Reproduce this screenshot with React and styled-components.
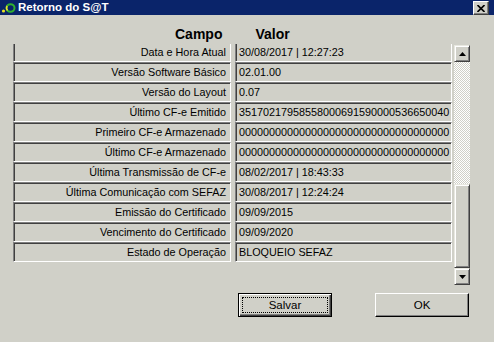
import React from 'react';
import styled, { createGlobalStyle } from 'styled-components';

const GlobalStyle = createGlobalStyle`
  body {
    margin: 0;
    background: #d0d0c8;
    font-family: "Liberation Sans", Arial, sans-serif;
  }
`;

const Window = styled.div`
  width: 494px;
  height: 342px;
  overflow: hidden;
  background: #d0d0c8;
`;

const TitleBar = styled.div`
  height: 15px;
  background: #0a246a;
  display: flex;
  align-items: center;
  padding-left: 1px;
`;

const TitleText = styled.span`
  color: #fff;
  font-weight: bold;
  font-size: 11.5px;
  line-height: 15px;
  margin-left: 2px;
`;

const CloseButton = styled.div`
  margin-left: auto;
  margin-right: 5px;
  align-self: flex-start;
  margin-top: 1px;
  width: 16px;
  height: 14px;
  box-sizing: border-box;
  background: #d0d0c8;
  border-top: 1px solid #fff;
  border-left: 1px solid #fff;
  border-right: 1px solid #404040;
  border-bottom: 1px solid #404040;
  box-shadow: inset -1px -1px 0 #808080;
  display: flex;
  align-items: center;
  justify-content: center;
`;

const Header = styled.div`
  display: flex;
  padding: 11px 0 2px 175px;
  gap: 33px;
  font-weight: bold;
  font-size: 14px;
  line-height: 16px;
  color: #000;
`;

const Body = styled.div`
  display: flex;
  align-items: flex-start;
  padding-left: 13px;
`;

const Viewport = styled.div`
  width: 439px;
  height: 241px;
  overflow: hidden;
`;

const List = styled.div`
  margin-top: -2px;
`;

const Row = styled.div`
  display: grid;
  grid-template-columns: 218px 217px;
  column-gap: 4px;
`;

const Cell = styled.div`
  box-sizing: border-box;
  height: 20px;
  border-top: 1px solid #808080;
  border-left: 1px solid #808080;
  border-bottom: 1px solid #fff;
  border-right: 1px solid #fff;
  box-shadow: inset 1px 1px 0 #404040;
  font-size: 10.8px;
  line-height: 18px;
  color: #000;
  white-space: nowrap;
  overflow: hidden;
  text-align: ${p => (p.$right ? 'right' : 'left')};
  padding: ${p => (p.$right ? '0 4px 0 0' : '0 0 0 3px')};
`;

const ScrollBar = styled.div`
  margin-left: 2px;
  margin-top: 1px;
  width: 16px;
  height: 240px;
  display: flex;
  flex-direction: column;
`;

const ScrollButton = styled.div`
  box-sizing: border-box;
  height: 17px;
  background: #d0d0c8;
  border-top: 1px solid #e8e8e0;
  border-left: 1px solid #e8e8e0;
  border-right: 1px solid #404040;
  border-bottom: 1px solid #404040;
  box-shadow: inset 1px 1px 0 #fff, inset -1px -1px 0 #808080;
  display: flex;
  align-items: center;
  justify-content: center;
`;

const Track = styled.div`
  height: ${p => p.$h}px;
  background: repeating-conic-gradient(#fff 0 25%, #d0d0c8 0 50%) 0 0 / 2px 2px;
`;

const Thumb = styled(ScrollButton)`
  height: ${p => p.$h}px;
`;

const ButtonRow = styled.div`
  display: flex;
  justify-content: flex-end;
  gap: 43px;
  padding: 8px 25px 0 0;
`;

const Button = styled.button`
  box-sizing: border-box;
  width: 94px;
  height: 24px;
  padding: 0;
  background: #d0d0c8;
  font-family: "Liberation Sans", Arial, sans-serif;
  font-size: 11.5px;
  color: #000;
  position: relative;
  border-top: 1px solid ${p => (p.$default ? '#000' : '#fff')};
  border-left: 1px solid ${p => (p.$default ? '#000' : '#fff')};
  border-right: 1px solid #000;
  border-bottom: 1px solid #000;
  box-shadow: ${p =>
    p.$default
      ? 'inset 1px 1px 0 #fff, inset -1px -1px 0 #404040, inset -2px -2px 0 #808080'
      : 'inset -1px -1px 0 #808080'};
`;

const FocusRing = styled.span`
  position: absolute;
  inset: 3px;
  border: 1px dotted #000;
`;

const Arrow = ({ down }) => (
  <svg width="7" height="4" viewBox="0 0 7 4">
    <polygon points={down ? '0,0 7,0 3.5,4' : '0,4 7,4 3.5,0'} fill="#000" />
  </svg>
);

const rows = [
  ['Data e Hora Atual', '30/08/2017 | 12:27:23'],
  ['Versão Software Básico', '02.01.00'],
  ['Versão do Layout', '0.07'],
  ['Último CF-e Emitido', '35170217958558000691590000536650040'],
  ['Primeiro CF-e Armazenado', '00000000000000000000000000000000000'],
  ['Último CF-e Armazenado', '00000000000000000000000000000000000'],
  ['Última Transmissão de CF-e', '08/02/2017 | 18:43:33'],
  ['Última Comunicação com SEFAZ', '30/08/2017 | 12:24:24'],
  ['Emissão do Certificado', '09/09/2015'],
  ['Vencimento do Certificado', '09/09/2020'],
  ['Estado de Operação', 'BLOQUEIO SEFAZ'],
];

export default function App() {
  return (
    <Window>
      <GlobalStyle />
      <TitleBar>
        <svg width="15" height="13" viewBox="0 0 15 13">
          <circle cx="2.5" cy="10" r="1.6" fill="#e8e020" />
          <ellipse cx="9.5" cy="7" rx="4" ry="3.8" fill="none" stroke="#30b030" strokeWidth="2" />
          <path d="M6.5 9.5 A4 3.8 0 0 1 6.2 5" fill="none" stroke="#f0e030" strokeWidth="1.5" />
        </svg>
        <TitleText>Retorno do S@T</TitleText>
        <CloseButton>
          <svg width="8" height="7" viewBox="0 0 8 7">
            <path d="M0.5 0 L7.5 7 M7.5 0 L0.5 7" stroke="#000" strokeWidth="1.6" />
          </svg>
        </CloseButton>
      </TitleBar>
      <Header>
        <span>Campo</span>
        <span>Valor</span>
      </Header>
      <Body>
        <Viewport>
          <List>
            {rows.map(([field, value]) => (
              <Row key={field}>
                <Cell $right>{field}</Cell>
                <Cell>{value}</Cell>
              </Row>
            ))}
          </List>
        </Viewport>
        <ScrollBar>
          <ScrollButton><Arrow /></ScrollButton>
          <Track $h={122} />
          <Thumb $h={84} />
          <ScrollButton><Arrow down /></ScrollButton>
        </ScrollBar>
      </Body>
      <ButtonRow>
        <Button $default>
          <FocusRing />
          Salvar
        </Button>
        <Button>OK</Button>
      </ButtonRow>
    </Window>
  );
}
